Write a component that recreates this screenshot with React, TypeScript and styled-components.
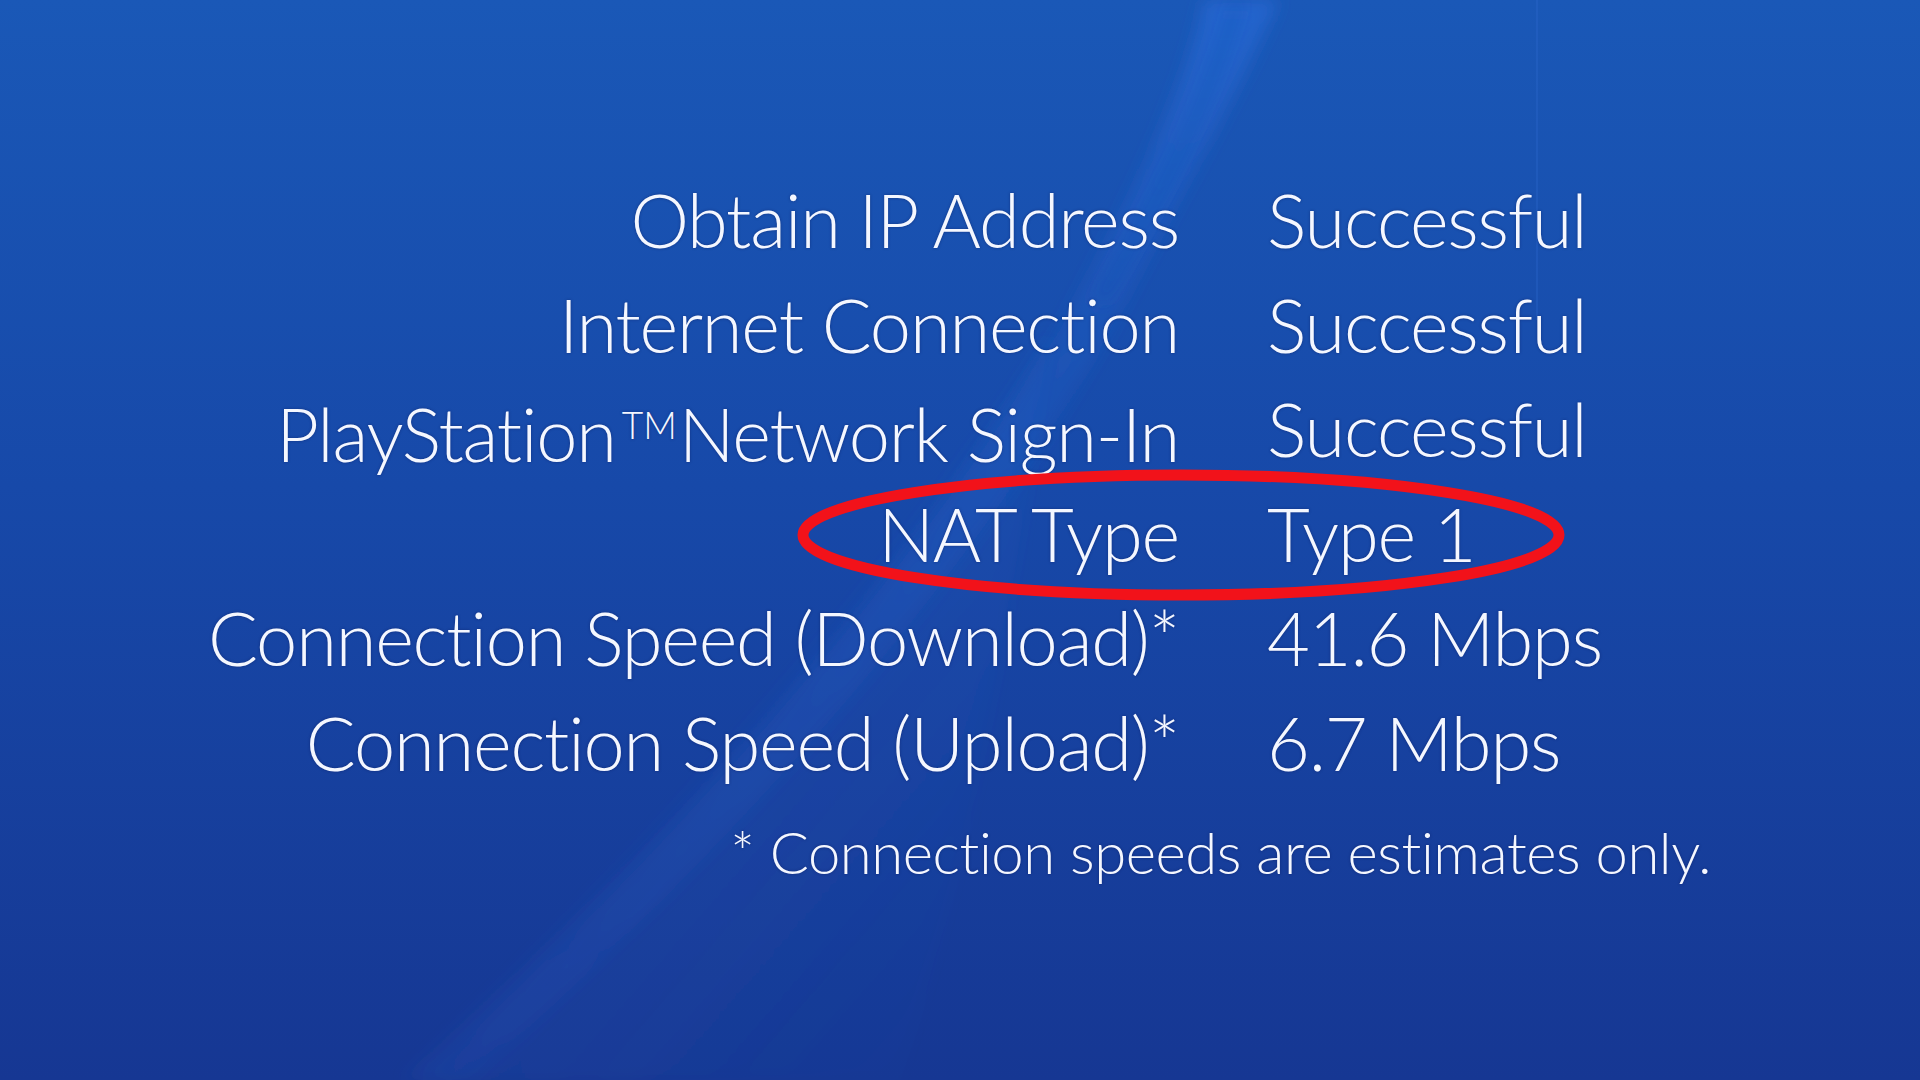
import styled, { createGlobalStyle } from "styled-components";
import { Fragment, ReactElement } from "react";

const GlobalStyle = createGlobalStyle`
  html, body {
    margin: 0;
    padding: 0;
    width: 1920px;
    height: 1080px;
    overflow: hidden;
    background: #1748a8;
  }
`;

const Screen = styled.main`
  position: relative;
  width: 1920px;
  height: 1080px;
  overflow: hidden;
  background: linear-gradient(180deg, #1a58b7 0%, #1749a9 45%, #163793 100%);
  font-family: "Lato", "Open Sans", "Liberation Sans", sans-serif;
  font-weight: 300;
  font-variant-ligatures: none;
  color: #f4f7ff;
  box-sizing: border-box;
  padding-top: 168px;
  display: flex;
  flex-direction: column;
`;

const Backdrop = styled.svg`
  position: absolute;
  inset: 0;
  width: 1920px;
  height: 1080px;
  pointer-events: none;
`;

const StatusGrid = styled.section`
  position: relative;
  display: grid;
  grid-template-columns: 1179px auto;
  column-gap: 88px;
  grid-auto-rows: 104.6px;
  align-items: center;
`;

const Label = styled.div`
  text-align: right;
  font-size: 74px;
  line-height: 104.6px;
  letter-spacing: -1.2px;
  white-space: nowrap;
  text-shadow: 0 0 3px rgba(10, 20, 80, 0.45);

  sup {
    font-size: 0.5em;
    vertical-align: 0.62em;
    letter-spacing: 0;
    margin: 0 2px 0 6px;
  }
`;

const Value = styled(Label)`
  text-align: left;
`;

const Footnote = styled.p`
  position: relative;
  margin: 0;
  margin-top: 16px;
  padding-right: 209px;
  text-align: right;
  font-size: 58px;
  line-height: 80px;
  letter-spacing: -0.45px;
  white-space: nowrap;
  text-shadow: 0 0 3px rgba(10, 20, 80, 0.45);
`;

const Highlight = styled.svg`
  position: absolute;
  left: 796px;
  top: 468px;
  width: 770px;
  height: 134px;
  pointer-events: none;
`;

const rows: { label: ReactElement | string; value: string }[] = [
  { label: "Obtain IP Address", value: "Successful" },
  { label: "Internet Connection", value: "Successful" },
  {
    label: (
      <>
        PlayStation<sup>TM</sup>Network Sign-In
      </>
    ),
    value: "Successful",
  },
  { label: "NAT Type", value: "Type 1" },
  { label: "Connection Speed (Download)*", value: "41.6 Mbps" },
  { label: "Connection Speed (Upload)*", value: "6.7 Mbps" },
];

const Swoosh = (): ReactElement => (
  <Backdrop viewBox="0 0 1920 1080">
    <defs>
      <linearGradient id="band" x1="0" y1="0" x2="0" y2="1">
        <stop offset="0" stopColor="#2a6ddc" stopOpacity="0.6" />
        <stop offset="0.3" stopColor="#2763cc" stopOpacity="0.28" />
        <stop offset="1" stopColor="#2a5fc4" stopOpacity="0.08" />
      </linearGradient>
      <linearGradient id="wash" x1="0" y1="0" x2="1" y2="1">
        <stop offset="0" stopColor="#3a7ae0" stopOpacity="0.14" />
        <stop offset="1" stopColor="#3a7ae0" stopOpacity="0" />
      </linearGradient>
      <filter id="soft" x="-10%" y="-10%" width="120%" height="120%">
        <feGaussianBlur stdDeviation="8" />
      </filter>
    </defs>
    <path
      d="M1050,330 C880,600 620,880 400,1080 L900,1080 C980,820 1020,560 1050,330 Z"
      fill="url(#wash)"
      filter="url(#soft)"
    />
    <path
      d="M1205,0 C1180,110 1120,220 1060,330 C900,600 640,880 420,1080 L470,1080 C700,880 960,600 1110,330 C1170,210 1240,90 1278,0 Z"
      fill="url(#band)"
      filter="url(#soft)"
    />
    <path
      d="M1238,0 C1210,100 1160,200 1100,300"
      fill="none"
      stroke="#1a4fb0"
      strokeOpacity="0.5"
      strokeWidth="6"
      filter="url(#soft)"
    />
    <line x1="1537" y1="0" x2="1537" y2="320" stroke="#2e6bd0" strokeOpacity="0.3" strokeWidth="2" />
  </Backdrop>
);

export default function App(): ReactElement {
  return (
    <>
      <GlobalStyle />
      <Screen>
        <Swoosh />
        <StatusGrid>
          {rows.map((row, i) => (
            <Fragment key={i}>
              <Label>{row.label}</Label>
              <Value>{row.value}</Value>
            </Fragment>
          ))}
        </StatusGrid>
        <Footnote>* Connection speeds are estimates only.</Footnote>
        <Highlight viewBox="0 0 770 134">
          <ellipse cx="385" cy="67" rx="378" ry="60" fill="none" stroke="#f2121a" strokeWidth="11" />
        </Highlight>
      </Screen>
    </>
  );
}
